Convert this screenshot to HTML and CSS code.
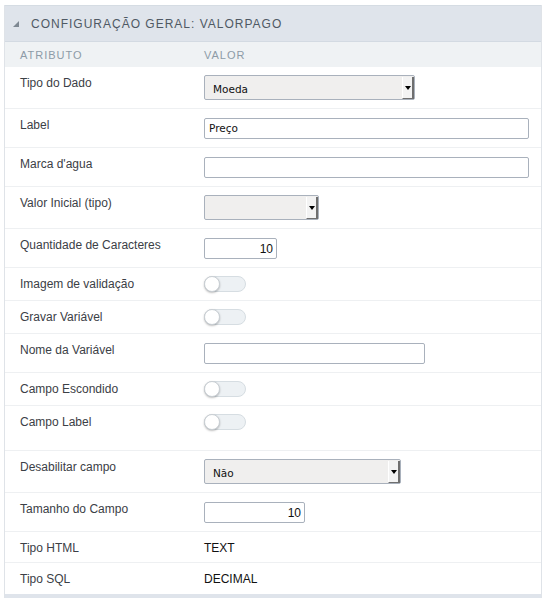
FILE: index.html
```html
<!DOCTYPE html>
<html lang="pt">
<head>
<meta charset="utf-8">
<title>Configuração Geral</title>
<link rel="stylesheet" href="styles.css">
</head>
<body>
<div class="panel">
  <div class="panel-head"><span class="tri"></span>CONFIGURAÇÃO GERAL: VALORPAGO</div>
  <div class="cols"><div class="c-attr">ATRIBUTO</div><div class="c-val">VALOR</div></div>

  <div class="row"><div class="lbl">Tipo do Dado</div><div class="val"><div class="select w210"><span class="sel-text">Moeda</span><span class="sel-btn"></span></div></div></div>
  <div class="row"><div class="lbl">Label</div><div class="val"><div class="input w324">Preço</div></div></div>
  <div class="row"><div class="lbl">Marca d'agua</div><div class="val"><div class="input w324"></div></div></div>
  <div class="row"><div class="lbl">Valor Inicial (tipo)</div><div class="val"><div class="select w114"><span class="sel-text"></span><span class="sel-btn"></span></div></div></div>
  <div class="row"><div class="lbl">Quantidade de Caracteres</div><div class="val"><div class="input num w72">10</div></div></div>
  <div class="row"><div class="lbl">Imagem de validação</div><div class="val"><span class="toggle"><span class="knob"></span></span></div></div>
  <div class="row"><div class="lbl">Gravar Variável</div><div class="val"><span class="toggle"><span class="knob"></span></span></div></div>
  <div class="row"><div class="lbl">Nome da Variável</div><div class="val"><div class="input w220"></div></div></div>
  <div class="row"><div class="lbl">Campo Escondido</div><div class="val"><span class="toggle"><span class="knob"></span></span></div></div>
  <div class="row tall"><div class="lbl">Campo Label</div><div class="val"><span class="toggle"><span class="knob"></span></span></div></div>
  <div class="row"><div class="lbl">Desabilitar campo</div><div class="val"><div class="select w196"><span class="sel-text">Não</span><span class="sel-btn"></span></div></div></div>
  <div class="row"><div class="lbl">Tamanho do Campo</div><div class="val"><div class="input num w100">10</div></div></div>
  <div class="row textrow"><div class="lbl">Tipo HTML</div><div class="val text">TEXT</div></div>
  <div class="row textrow last"><div class="lbl">Tipo SQL</div><div class="val text">DECIMAL</div></div>
  <div class="panel-foot"></div>
</div>
</body>
</html>
```

FILE: styles.css
```css
html, body {
  margin: 0;
  padding: 0;
  background: #ffffff;
}
body {
  font-family: "Liberation Sans", Arial, sans-serif;
  font-size: 12px;
  color: #3a3f44;
}
.panel {
  margin: 5px 1px 0 4px;
  border-left: 1px solid #dfe3e8;
  border-right: 1px solid #dfe3e8;
}
.panel-head {
  height: 35px;
  background: #dfe4eb;
  border-top: 1px solid #d5dce3;
  border-bottom: 1px solid #d3dae2;
  display: flex;
  align-items: center;
  padding-left: 8px;
  font-size: 12px;
  letter-spacing: 1px;
  color: #4f5964;
}
.tri {
  width: 0;
  height: 0;
  border-left: 6px solid transparent;
  border-bottom: 6px solid #7e8892;
  margin: 1px 12px 0 0;
}
.cols {
  height: 25px;
  background: #eff2f4;
  display: flex;
  align-items: center;
  font-size: 11px;
  letter-spacing: 1px;
  color: #8d9ba7;
}
.c-attr { width: 184px; padding-left: 15px; }
.row {
  display: flex;
  padding: 8px 0;
  border-bottom: 1px solid #eef0f2;
}
.row.tall { padding-bottom: 20px; }
.row.textrow { padding-bottom: 7px; }
.row.last { border-bottom-color: transparent; }
.lbl {
  width: 184px;
  padding-left: 15px;
  padding-top: 1px;
  line-height: 14px;
  color: #3b4046;
}
.val { display: flex; }
.val.text {
  line-height: 14px;
  color: #111;
  padding-top: 1px;
}
.select {
  height: 25px;
  box-sizing: border-box;
  background: #f0efee;
  border: 1px solid #a9b1bc;
  border-radius: 2px;
  display: flex;
  justify-content: space-between;
  font-family: "DejaVu Sans", Verdana, sans-serif;
  font-size: 10.5px;
  color: #111;
}
.sel-text { padding: 7px 0 0 8px; }
.sel-btn {
  width: 9px;
  height: 21px;
  margin-top: 1px;
  background: #f3f3f3;
  border-left: 1px solid #ffffff;
  border-right: 2px solid #6f6f6f;
  border-bottom: 1px solid #6f6f6f;
  display: flex;
  align-items: center;
  justify-content: center;
}
.sel-btn::after {
  content: "";
  width: 0;
  height: 0;
  border-left: 3px solid transparent;
  border-right: 3px solid transparent;
  border-top: 4px solid #000;
}
.input {
  height: 21px;
  margin-top: 1px;
  box-sizing: border-box;
  border: 1px solid #a9b1bc;
  border-radius: 2px;
  background: #fff;
  padding: 3px 4px 0;
  font-family: "DejaVu Sans", Verdana, sans-serif;
  font-size: 10.5px;
  color: #111;
}
.input.num {
  text-align: right;
  font-family: "Liberation Sans", Arial, sans-serif;
  font-size: 12px;
  padding-right: 3px;
  padding-top: 3px;
}
.w210 { width: 211px; }
.w114 { width: 115px; }
.w196 { width: 197px; }
.w324 { width: 325px; }
.w220 { width: 221px; }
.w72 { width: 73px; }
.w100 { width: 101px; }
.toggle {
  position: relative;
  width: 42px;
  height: 16px;
  box-sizing: border-box;
  border: 1px solid #d6dde2;
  border-radius: 9px;
  background: #edf1f4;
}
.knob {
  position: absolute;
  left: -1px;
  top: -1px;
  width: 16px;
  height: 16px;
  box-sizing: border-box;
  border-radius: 50%;
  background: #fff;
  border: 1px solid #c9cfd4;
  box-shadow: 0 1px 2px rgba(0,0,0,0.25);
}
.panel-foot {
  height: 4px;
  background: #dfe4eb;
}
```
